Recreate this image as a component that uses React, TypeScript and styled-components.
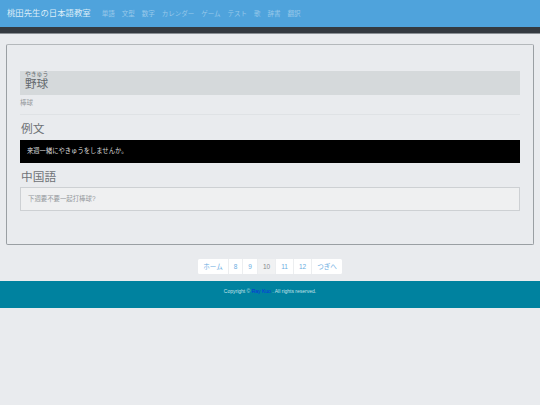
import * as React from 'react';
import styled, { createGlobalStyle } from 'styled-components';

const GlobalStyle = createGlobalStyle`
  html, body {
    margin: 0;
    padding: 0;
    background-color: #e9ebee;
    font-family: "Liberation Sans", "Noto Sans CJK JP", sans-serif;
  }
  #root {
    opacity: 0.999;
  }
`;

const Navbar = styled.nav`
  display: flex;
  align-items: center;
  height: 27px;
  padding: 0 7px 3px;
  box-sizing: border-box;
  background-color: #4fa3dc;
`;

const Brand = styled.a`
  font-size: 8.4px;
  color: #dcedf8;
  margin-right: 11px;
`;

const NavLinks = styled.div`
  display: flex;
  gap: 7px;
  margin-top: 1px;
`;

const NavLink = styled.a`
  font-size: 6.5px;
  color: #99c9ea;
`;

const DarkBar = styled.div`
  height: 6px;
  background-color: #343a40;
  border-bottom: 1px solid #8a8f94;
`;

const Panel = styled.section`
  margin: 10px 6px 0;
  height: 201px;
  box-sizing: border-box;
  padding: 26px 13px 0;
  border: 1px solid #9a9fa3;
  border-top-color: #b4b8bb;
  border-radius: 2px;
`;

const WordBox = styled.div`
  height: 24px;
  background-color: #d5d9db;
  padding-left: 5px;
  color: #62676b;
  font-size: 11.6px;
  line-height: 19px;

  ruby {
    ruby-position: over;
  }
  rt {
    font-size: 5.8px;
    line-height: 5px;
    color: #62676b;
  }
`;

const Translation = styled.p`
  margin: 2.5px 0 0;
  height: 10px;
  font-size: 6.5px;
  line-height: 10px;
  color: #94989c;
`;

const Divider = styled.hr`
  margin: 6.5px 0 0;
  border: 0;
  border-top: 1px solid #dfe2e5;
`;

const SectionTitle = styled.h3`
  margin: 0;
  padding-left: 1px;
  height: 24.5px;
  font-size: 11.7px;
  font-weight: 400;
  line-height: 28px;
  color: #6e7276;
`;

const ExampleBox = styled.div`
  height: 23.2px;
  box-sizing: border-box;
  padding-left: 7px;
  background-color: #000;
  color: #dedede;
  font-size: 6.3px;
  line-height: 22px;
`;

const ChineseBox = styled.div`
  height: 23.5px;
  box-sizing: border-box;
  padding-left: 7px;
  background-color: #eff0f1;
  border: 1px solid #cdd0d3;
  color: #94989c;
  font-size: 6.4px;
  line-height: 21px;
`;

const Pagination = styled.ul`
  display: flex;
  justify-content: center;
  list-style: none;
  margin: 14px 0 0;
  padding: 0;
`;

const PageItem = styled.li<{ $active?: boolean }>`
  height: 15px;
  padding: 0 5px;
  background-color: ${(p) => (p.$active ? '#f1f2f3' : '#ffffff')};
  border-right: 1px solid #eceef0;
  color: ${(p) => (p.$active ? '#85898d' : '#6aaddf')};
  font-size: 6.5px;
  line-height: 15px;

  &:first-child {
    border-radius: 1.5px 0 0 1.5px;
  }
  &:last-child {
    border-right: 0;
    border-radius: 0 1.5px 1.5px 0;
  }
`;

const Footer = styled.footer`
  margin-top: 7px;
  height: 27px;
  background-color: #00829f;
  color: #c4e2ea;
  font-size: 5px;
  line-height: 21px;
  text-align: center;

  a {
    color: #0a2fe0;
  }
`;

const navItems = ['単語', '文型', '数字', 'カレンダー', 'ゲーム', 'テスト', '歌', '辞書', '翻訳'];
const pages = ['ホーム', '8', '9', '10', '11', '12', 'つぎへ'];

const App: React.FC = () => {
  return (
    <>
      <GlobalStyle />
      <Navbar>
        <Brand>桃田先生の日本語教室</Brand>
        <NavLinks>
          {navItems.map((item) => (
            <NavLink key={item}>{item}</NavLink>
          ))}
        </NavLinks>
      </Navbar>
      <DarkBar />
      <Panel>
        <WordBox>
          <ruby>
            野球<rt>やきゅう</rt>
          </ruby>
        </WordBox>
        <Translation>棒球</Translation>
        <Divider />
        <SectionTitle>例文</SectionTitle>
        <ExampleBox>来週一緒にやきゅうをしませんか。</ExampleBox>
        <SectionTitle>中国語</SectionTitle>
        <ChineseBox>下週要不要一起打棒球?</ChineseBox>
      </Panel>
      <Pagination>
        {pages.map((page) => (
          <PageItem key={page} $active={page === '10'}>
            {page}
          </PageItem>
        ))}
      </Pagination>
      <Footer>
        Copyright © <a>Ray Kuo</a> . All rights reserved.
      </Footer>
    </>
  );
};

export default App;
